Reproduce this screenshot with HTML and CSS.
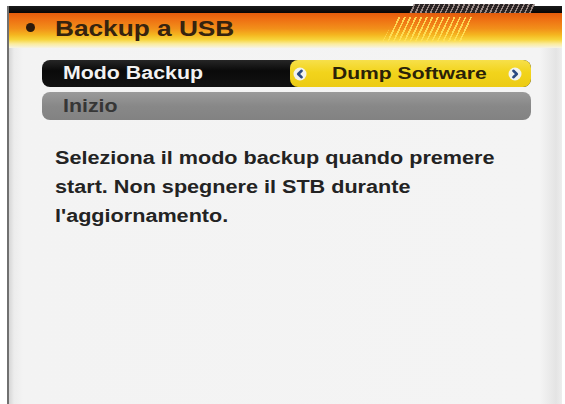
FILE: index.html
```html
<!DOCTYPE html>
<html lang="it">
<head>
<meta charset="utf-8">
<title>Backup a USB</title>
<link rel="stylesheet" href="styles.css">
</head>
<body>
<div class="screen">
  <div class="topbar"><span class="tab"></span></div>
  <header class="title-bar">
    <span class="dot"></span>
    <h1 class="title"><span class="stretch">Backup a USB</span></h1>
    <span class="hatch"></span>
  </header>
  <div class="menu">
    <div class="row row-active">
      <span class="label stretch">Modo Backup</span>
      <div class="value">
        <svg class="arrow" viewBox="0 0 14 14" width="14" height="14"><circle cx="7" cy="7" r="6.5" fill="#f2f3ef"/><path d="M8.6 3.8 L5.2 7 L8.6 10.2" fill="none" stroke="#2b4a82" stroke-width="2.6" stroke-linecap="round" stroke-linejoin="round"/></svg>
        <span class="value-text stretch">Dump Software</span>
        <svg class="arrow arrow-right" viewBox="0 0 14 14" width="14" height="14"><circle cx="7" cy="7" r="6.5" fill="#f2f3ef"/><path d="M5.4 3.8 L8.8 7 L5.4 10.2" fill="none" stroke="#2b4a82" stroke-width="2.6" stroke-linecap="round" stroke-linejoin="round"/></svg>
      </div>
    </div>
    <div class="row row-gray">
      <span class="label stretch">Inizio</span>
    </div>
  </div>
  <p class="help">Seleziona il modo backup quando premere start. Non spegnere il STB durante l'aggiornamento.</p>
</div>
</body>
</html>
```

FILE: styles.css
```css
html, body {
  margin: 0;
  padding: 0;
  background: #ffffff;
}

body {
  font-family: "Liberation Sans", Arial, sans-serif;
  font-weight: bold;
  overflow: hidden;
}

.screen {
  position: relative;
  margin: 6px 0 0 7px;
  width: 553px;
  height: 398px;
  border-left: 2px solid #707070;
  background: linear-gradient(to right, #d6d6d6 0, #ececec 5px, #f3f3f3 14px, #f4f4f4 calc(100% - 22px), #e4e4e4 calc(100% - 6px), #ededed 100%);
}

.stretch {
  display: inline-block;
  transform: scaleX(1.22);
  transform-origin: 0 50%;
  white-space: nowrap;
}

/* top black bar */
.topbar {
  position: relative;
  height: 7px;
  background: linear-gradient(#1a1a1a, #050505);
}

.topbar .tab {
  position: absolute;
  left: 400px;
  top: -2px;
  width: 126px;
  height: 9px;
  background: repeating-linear-gradient(115deg, #9a8a86 0 1.5px, #2a2424 1.5px 4.5px);
  clip-path: polygon(5px 0, 100% 0, calc(100% - 4px) 100%, 0 100%);
}

/* orange title bar */
.title-bar {
  position: relative;
  height: 35px;
  display: flex;
  align-items: center;
  background: linear-gradient(#e35c0c 0%, #ef7414 22%, #f2901a 45%, #f5b51f 62%, #f7d43a 76%, #faeb9c 88%, #f6f3e6 100%);
}

.dot {
  width: 9px;
  height: 9px;
  margin: -6px 0 0 17px;
  border-radius: 50%;
  background: #2e1a0c;
}

.title {
  margin: -4px 0 0 20px;
  font-size: 21.5px;
  line-height: 24px;
  color: #36230f;
  font-weight: bold;
}

.hatch {
  position: absolute;
  left: 373px;
  top: 4px;
  width: 92px;
  height: 25px;
  background: repeating-linear-gradient(115deg, rgba(255, 226, 90, 0.9) 0 1.6px, rgba(255, 226, 90, 0) 1.6px 5px);
  clip-path: polygon(14px 0, 100% 0, calc(100% - 12px) 100%, 0 100%);
}

/* menu rows */
.menu {
  margin: 12px 0 0 33px;
  width: 489px;
  display: flex;
  flex-direction: column;
  gap: 5px;
}

.row {
  display: flex;
  align-items: center;
  border-radius: 8px;
  font-size: 17.5px;
}

.row .label {
  margin-left: 21px;
}

.row-active {
  height: 27px;
  background: linear-gradient(#262626, #0a0a0a 40%, #111111);
  color: #f2f2f2;
}

.row-gray {
  height: 28px;
  background: linear-gradient(#9a9a9a, #888888 50%, #828282);
  color: #363636;
}

.value {
  margin-left: auto;
  width: 229px;
  height: 27px;
  display: flex;
  align-items: center;
  padding: 0 9px 0 3px;
  border-radius: 8px;
  background: linear-gradient(#f7e04a, #f2d41c 45%, #eccb14);
  color: #2a2208;
}

.value .value-text {
  font-size: 17.3px;
}

.arrow {
  display: block;
  flex: none;
}

.value-text {
  margin-left: 25px;
}

.arrow-right {
  margin-left: auto;
}

/* help text */
.help {
  margin: 24px 0 0 46px;
  width: 360px;
  font-size: 17.5px;
  line-height: 29px;
  color: #232323;
  transform: scaleX(1.235);
  transform-origin: 0 0;
}
```
